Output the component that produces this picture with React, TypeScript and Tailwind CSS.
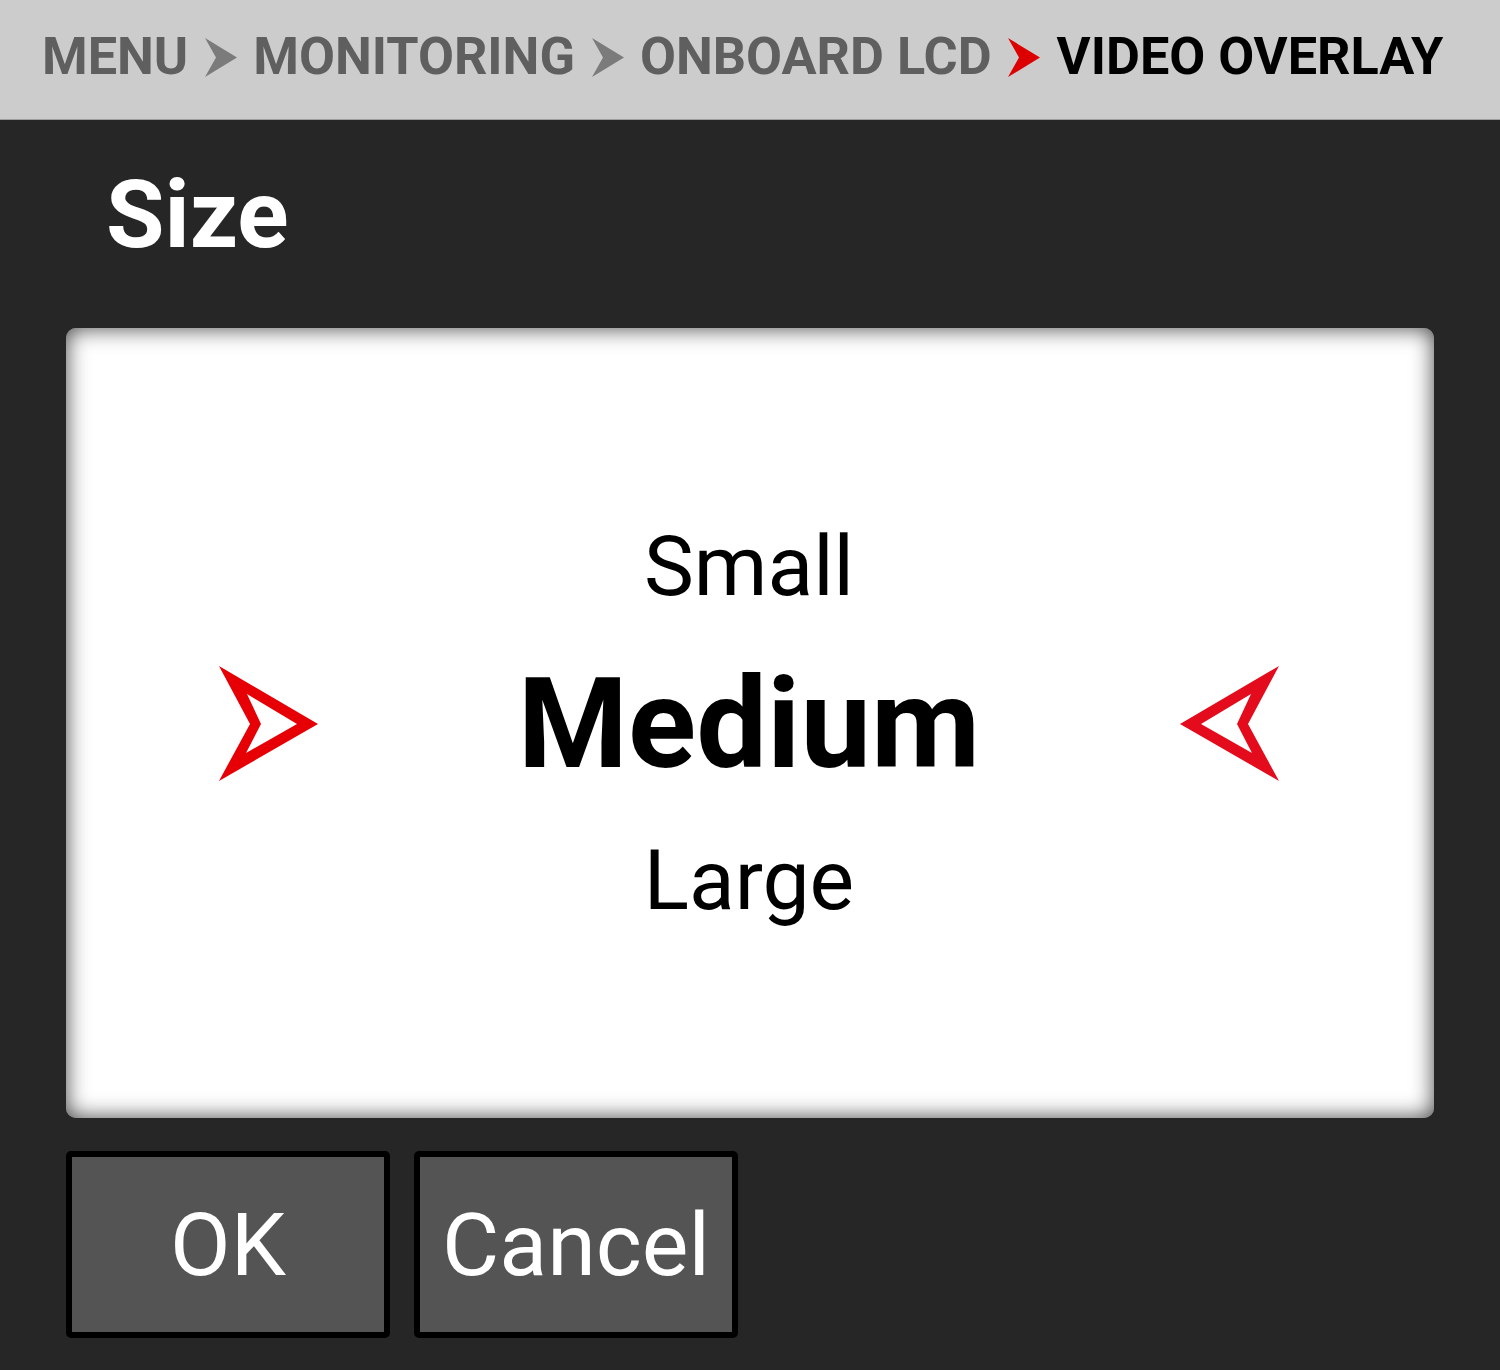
import React from "react";

function Crumb({ color }: { color: string }) {
  return (
    <svg width="32" height="39" viewBox="0 0 32 39" className="shrink-0">
      <polygon points="0,0 32,19.5 0,39 11,19.5" fill={color} />
    </svg>
  );
}

function Arrow({ flip }: { flip?: boolean }) {
  return (
    <svg
      width="101"
      height="117"
      viewBox="0 0 101 117"
      className={flip ? "shrink-0 -scale-x-100" : "shrink-0"}
    >
      <path
        fillRule="evenodd"
        fill={flip ? "#e30b1c" : "#e60006"}
        d="M1 1 L100 59 L1 116 L32 59 Z M29 29 L43 59 L28 88 L79 59 Z"
      />
    </svg>
  );
}

export default function App() {
  return (
    <div
      className="w-[1500px] h-[1370px] bg-[#262626] flex flex-col overflow-hidden"
      style={{ fontFamily: "Roboto, 'Noto Sans', sans-serif" }}
    >
      <div className="h-[120px] bg-[#cccccc] border-b border-[#9d9d9d] flex items-center pl-[42px] pb-[4px] gap-[16.5px] text-[52.2px] font-bold leading-none shrink-0">
        <span className="text-[#5f5f5f]">MENU</span>
        <Crumb color="#7b7b7b" />
        <span className="text-[#5f5f5f]">MONITORING</span>
        <Crumb color="#7b7b7b" />
        <span className="text-[#5f5f5f]">ONBOARD LCD</span>
        <Crumb color="#dd0000" />
        <span className="text-black">VIDEO OVERLAY</span>
      </div>

      <div className="pl-[106px] pt-[47px] text-white font-bold text-[95px] leading-none">
        Size
      </div>

      <div className="mx-[66px] mt-[66px] h-[790px] bg-white rounded-[10px] shadow-[inset_0_0_22px_rgba(0,0,0,0.75)] flex items-center pl-[152px] pr-[154px]">
        <Arrow />
        <div className="flex-1 flex flex-col items-center text-black pt-[2px]">
          <div className="text-[84px] leading-none">Small</div>
          <div className="text-[126px] font-bold leading-none mt-[52px]">Medium</div>
          <div className="text-[84px] leading-none mt-[52px]">Large</div>
        </div>
        <Arrow flip />
      </div>

      <div className="flex gap-[24px] pl-[66px] mt-[33px]">
        <div className="w-[324px] h-[187px] border-[6px] border-black rounded-[5px] bg-[#545454] flex items-center justify-center text-white text-[88px] leading-none">
          OK
        </div>
        <div className="w-[324px] h-[187px] border-[6px] border-black rounded-[5px] bg-[#545454] flex items-center justify-center text-white text-[88px] leading-none">
          Cancel
        </div>
      </div>
    </div>
  );
}
